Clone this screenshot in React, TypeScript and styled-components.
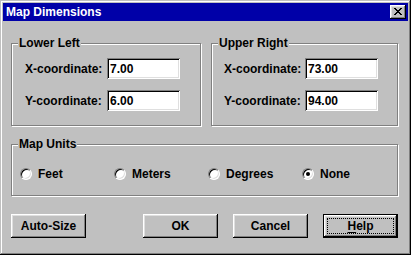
import React from "react";
import styled, { createGlobalStyle } from "styled-components";

const Global = createGlobalStyle`
  html, body { margin: 0; padding: 0; background: #c0c0c0; }
  body { font-family: "Liberation Sans", Arial, sans-serif; }
`;

const Window = styled.div`
  box-sizing: border-box;
  width: 411px;
  height: 255px;
  background: #c0c0c0;
  padding: 3px;
  box-shadow: inset -1px -1px #000, inset 1px 1px #c0c0c0, inset -2px -2px #808080, inset 2px 2px #fff;
  display: flex;
  flex-direction: column;
  font: bold 12px "Liberation Sans", Arial, sans-serif;
  color: #000;
`;

const TitleBar = styled.div`
  height: 18px;
  flex: none;
  background: #0000a8;
  display: flex;
  align-items: center;
  justify-content: space-between;
  padding: 0 2px 0 3px;
`;

const Title = styled.span`
  color: #fff;
  font: bold 12px "Liberation Sans", Arial, sans-serif;
  line-height: 18px;
`;

const CloseButton = styled.button`
  box-sizing: border-box;
  width: 16px;
  height: 14px;
  padding: 0;
  border: none;
  background: #c0c0c0;
  display: flex;
  align-items: center;
  justify-content: center;
  box-shadow: inset -1px -1px #000, inset 1px 1px #fff, inset -2px -2px #808080, inset 2px 2px #dfdfdf;
  svg { display: block; margin-left: -1px; margin-top: -1px; }
`;

const Body = styled.div`
  flex: 1;
  display: flex;
  flex-direction: column;
  padding: 15px 10px 0 8px;
`;

const TopRow = styled.div`
  display: grid;
  grid-template-columns: 190px 1fr;
  column-gap: 10px;
`;

const Group = styled.fieldset<{ $height: number; $gapTop?: number }>`
  box-sizing: border-box;
  margin: ${(p) => p.$gapTop ?? 0}px 0 0 0;
  min-width: 0;
  height: ${(p) => p.$height}px;
  padding: 0 6px;
  border: 1px solid #808080;
  box-shadow: inset 1px 1px #fff, 1px 1px #fff;
`;

const Legend = styled.legend`
  padding: 0 1px;
  background: #c0c0c0;
  font: bold 12px "Liberation Sans", Arial, sans-serif;
  line-height: 14px;
`;

const FieldGrid = styled.div<{ $indent: number; $labelWidth: number }>`
  display: grid;
  grid-template-columns: ${(p) => p.$labelWidth}px 73px;
  column-gap: 6px;
  row-gap: 11px;
  align-items: center;
  padding: 8px 0 0 ${(p) => p.$indent}px;
`;

const FieldLabel = styled.label`
  white-space: nowrap;
`;

const Edit = styled.input`
  box-sizing: border-box;
  width: 73px;
  height: 21px;
  margin: 0;
  border: none;
  outline: none;
  padding: 0 2px 0 3px;
  background: #fff;
  color: #000;
  font: bold 12px "Liberation Sans", Arial, sans-serif;
  box-shadow: inset 1px 1px #808080, inset -1px -1px #fff, inset 2px 2px #000, inset -2px -2px #dfdfdf;
`;

const RadioRow = styled.div`
  display: grid;
  grid-template-columns: repeat(4, 94px);
  padding: 16px 0 0 2px;
`;

const RadioItem = styled.label`
  display: flex;
  align-items: center;
  gap: 6px;
  white-space: nowrap;
`;

const RadioCircle = styled.span<{ $checked?: boolean }>`
  box-sizing: border-box;
  position: relative;
  width: 12px;
  height: 12px;
  flex: none;
  border-radius: 50%;
  background: #fff;
  border: 1px solid;
  border-color: #808080 #fff #fff #808080;
  box-shadow: inset 1px 1px #000, inset -1px -1px #dfdfdf;
  &::after {
    content: "";
    display: ${(p) => (p.$checked ? "block" : "none")};
    position: absolute;
    left: 3px;
    top: 3px;
    width: 4px;
    height: 4px;
    border-radius: 50%;
    background: #000;
  }
`;

const ButtonRow = styled.div`
  display: flex;
  margin-top: 18px;
`;

const RightButtons = styled.div`
  display: flex;
  gap: 15px;
  margin-left: auto;
`;

const Button = styled.button<{ $default?: boolean }>`
  box-sizing: border-box;
  position: relative;
  width: 75px;
  height: 24px;
  padding: 0;
  border: none;
  background: #c0c0c0;
  color: #000;
  font: bold 12px "Liberation Sans", Arial, sans-serif;
  box-shadow: ${(p) =>
    p.$default
      ? "inset 0 0 0 1px #000, inset -2px -2px #000, inset 2px 2px #fff, inset -3px -3px #808080, inset 3px 3px #dfdfdf"
      : "inset -1px -1px #000, inset 1px 1px #fff, inset -2px -2px #808080, inset 2px 2px #dfdfdf"};
  &::after {
    content: "";
    display: ${(p) => (p.$default ? "block" : "none")};
    position: absolute;
    inset: 4px;
    border: 1px dotted #000;
  }
  u { text-decoration: underline; text-underline-offset: 2px; }
`;

function CloseGlyph() {
  return (
    <svg width="8" height="7" viewBox="0 0 8 7" shapeRendering="crispEdges">
      <path
        fill="#000"
        d="M0 0h2v1H0zM6 0h2v1H6zM1 1h2v1H1zM5 1h2v1H5zM2 2h4v1H2zM3 3h2v1H3zM2 4h4v1H2zM1 5h2v1H1zM5 5h2v1H5zM0 6h2v1H0zM6 6h2v1H6z"
      />
    </svg>
  );
}

const units = ["Feet", "Meters", "Degrees", "None"];

export default function App() {
  return (
    <>
      <Global />
      <Window>
        <TitleBar>
          <Title>Map Dimensions</Title>
          <CloseButton aria-label="Close">
            <CloseGlyph />
          </CloseButton>
        </TitleBar>
        <Body>
          <TopRow>
            <Group $height={90}>
              <Legend>Lower Left</Legend>
              <FieldGrid $indent={7} $labelWidth={76}>
                <FieldLabel>X-coordinate:</FieldLabel>
                <Edit defaultValue="7.00" />
                <FieldLabel>Y-coordinate:</FieldLabel>
                <Edit defaultValue="6.00" />
              </FieldGrid>
            </Group>
            <Group $height={90}>
              <Legend>Upper Right</Legend>
              <FieldGrid $indent={6} $labelWidth={75}>
                <FieldLabel>X-coordinate:</FieldLabel>
                <Edit defaultValue="73.00" />
                <FieldLabel>Y-coordinate:</FieldLabel>
                <Edit defaultValue="94.00" />
              </FieldGrid>
            </Group>
          </TopRow>
          <Group $height={59} $gapTop={11}>
            <Legend>Map Units</Legend>
            <RadioRow>
              {units.map((u) => (
                <RadioItem key={u}>
                  <RadioCircle $checked={u === "None"} />
                  {u}
                </RadioItem>
              ))}
            </RadioRow>
          </Group>
          <ButtonRow>
            <Button>Auto-Size</Button>
            <RightButtons>
              <Button>OK</Button>
              <Button>Cancel</Button>
              <Button $default>
                <u>H</u>elp
              </Button>
            </RightButtons>
          </ButtonRow>
        </Body>
      </Window>
    </>
  );
}
